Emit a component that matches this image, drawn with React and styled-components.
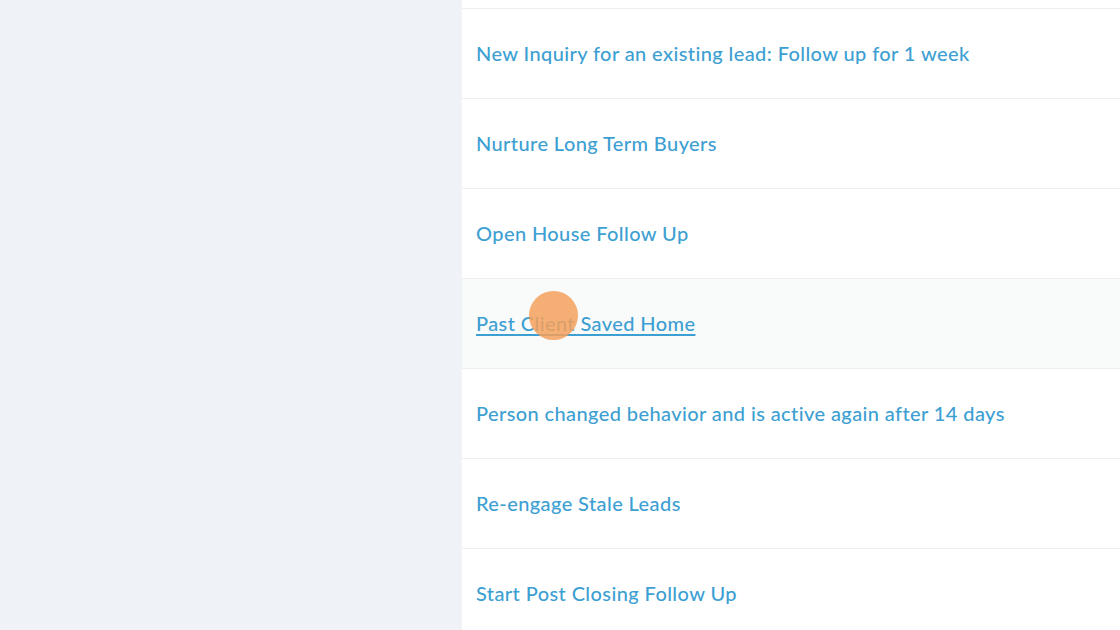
import React from 'react';
import styled, { createGlobalStyle } from 'styled-components';

const GlobalStyle = createGlobalStyle`
  html, body {
    margin: 0;
    padding: 0;
    background: #eff3f7;
    font-family: Lato, "Open Sans", sans-serif;
  }
`;

const Page = styled.div`
  display: flex;
  width: 1120px;
  height: 630px;
  overflow: hidden;
  position: relative;
`;

const Sidebar = styled.div`
  width: 462px;
  flex-shrink: 0;
  background: #eff3f7;
`;

const List = styled.div`
  flex: 1;
  background: #fff;
  padding-top: 8px;
`;

const Row = styled.div`
  box-sizing: border-box;
  height: 90px;
  display: flex;
  align-items: center;
  padding-left: 14px;
  padding-bottom: 2px;
  border-top: 1px solid #edf0f2;
  background: ${(p) => (p.hovered ? '#f9fafa' : '#fff')};
`;

const Link = styled.a`
  color: #3d9fd2;
  font-size: 20px;
  font-weight: 500;
  letter-spacing: 0.4px;
  text-decoration: ${(p) => (p.hovered ? 'underline' : 'none')};
  text-underline-offset: 3px;
  cursor: pointer;
`;

const Cursor = styled.div`
  position: absolute;
  left: 529px;
  top: 291px;
  width: 49px;
  height: 49px;
  border-radius: 50%;
  background: rgba(245, 160, 90, 0.85);
  pointer-events: none;
`;

const items = [
  'New Inquiry for an existing lead: Follow up for 1 week',
  'Nurture Long Term Buyers',
  'Open House Follow Up',
  'Past Client Saved Home',
  'Person changed behavior and is active again after 14 days',
  'Re-engage Stale Leads',
  'Start Post Closing Follow Up',
];

export default function App() {
  return (
    <Page>
      <GlobalStyle />
      <Sidebar />
      <List>
        {items.map((name) => {
          const hovered = name === 'Past Client Saved Home';
          return (
            <Row key={name} hovered={hovered}>
              <Link hovered={hovered}>{name}</Link>
            </Row>
          );
        })}
      </List>
      <Cursor />
    </Page>
  );
}
